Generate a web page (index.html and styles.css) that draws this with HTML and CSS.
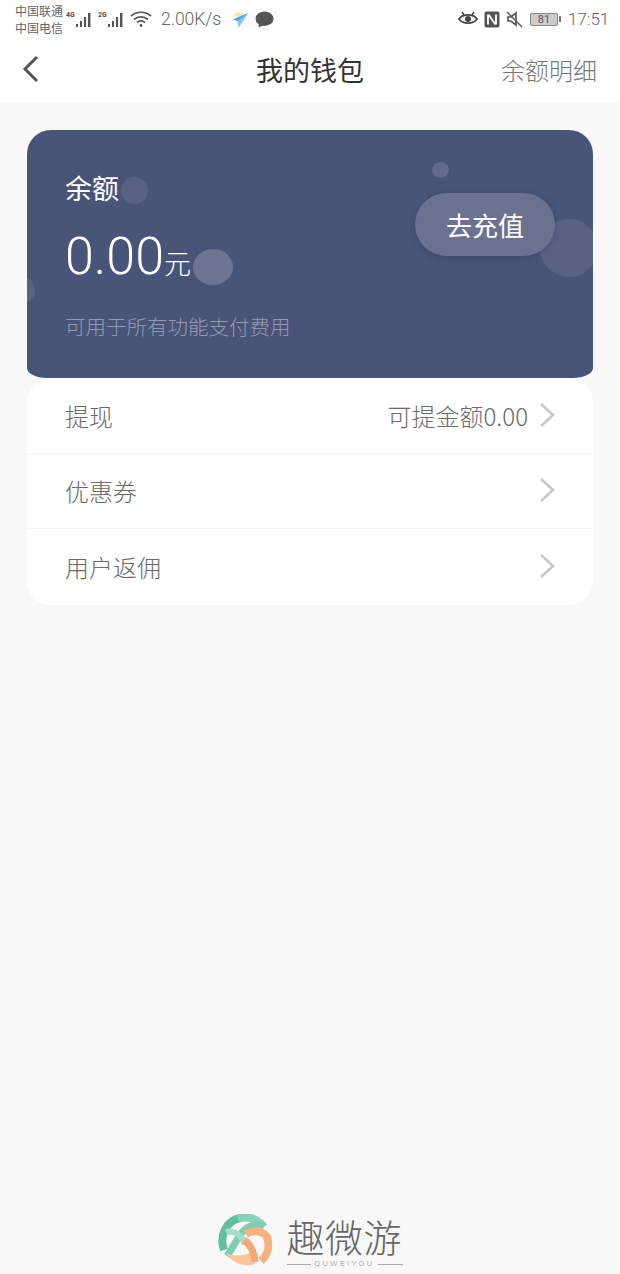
FILE: index.html
```html
<!DOCTYPE html>
<html lang="zh-CN">
<head>
<meta charset="utf-8">
<title>我的钱包</title>
<link rel="stylesheet" href="styles.css">
</head>
<body>
<div class="page">
  <div class="top">
    <div class="status">
      <div class="carriers"><span>中国联通</span><span>中国电信</span></div>
      <svg class="sig" width="29" height="20" viewBox="0 0 29 20">
        <text class="sig-label" x="0" y="8">4G</text>
        <g class="bars"><rect x="10" y="15" width="2" height="3"/><rect x="14" y="12" width="2" height="6"/><rect x="18" y="8" width="2" height="10"/><rect x="22" y="4" width="2.4" height="14"/></g>
      </svg>
      <svg class="sig sig-b" width="29" height="20" viewBox="0 0 29 20">
        <text class="sig-label" x="0" y="8">2G</text>
        <g class="bars"><rect x="10" y="15" width="2" height="3"/><rect x="14" y="12" width="2" height="6"/><rect x="18" y="8" width="2" height="10"/><rect x="22" y="4" width="2.4" height="14"/></g>
      </svg>
      <svg class="wifi" width="22" height="18" viewBox="0 0 22 18" fill="none" stroke="#555" stroke-width="1.7">
        <path d="M1 6c5.500-5 14.500-5 20 0"/><path d="M4 9.500c4-3.500 10-3.500 14 0"/><path d="M7 12.500c2.500-2 5.500-2 8 0"/>
        <circle cx="11" cy="15.500" r="1.400" fill="#555" stroke="none"/>
      </svg>
      <span class="speed">2.00K/s</span>
      <svg class="plane" width="17" height="17" viewBox="0 0 17 17">
        <path d="M2 3l6-2 3 3-6 3z" fill="#f2e5a6"/>
        <path d="M16 2L1 8.500l4.500 1.500L7 16z" fill="#4a9fe0"/>
        <path d="M16 2L5.500 10 7 16l2.500-4z" fill="#8cc6ee"/>
      </svg>
      <svg class="bubble" width="19" height="17" viewBox="0 0 19 17">
        <ellipse cx="9.500" cy="7.700" rx="9" ry="7.200" fill="#555"/>
        <path d="M4 12l-.5 4.500L9 14z" fill="#555"/>
      </svg>
      <div class="status-right">
        <svg width="20" height="16" viewBox="0 0 20 16" fill="none" stroke="#444" stroke-width="1.800">
          <path d="M1 8c4-5.500 14-5.500 18 0-4 5.500-14 5.500-18 0z"/>
          <circle cx="10" cy="8" r="3" fill="#444" stroke="none"/>
          <path d="M4 1l2 3M16 1l-2 3" stroke-width="1.500"/>
        </svg>
        <svg width="16" height="17" viewBox="0 0 16 17">
          <rect x="0.500" y="0.500" width="15" height="16" rx="2" fill="#555"/>
          <path d="M4 3.500v10M12 3.500v10M4.500 3.500l7 10" fill="none" stroke="#fff" stroke-width="1.800"/>
        </svg>
        <svg width="17" height="17" viewBox="0 0 17 17" fill="none" stroke="#555" stroke-width="1.700">
          <path d="M2 6h3l5-4v12l-5-4H2z"/>
          <path d="M1 1l15 15" stroke-width="1.500"/>
        </svg>
        <div class="battery"><span class="battery-body">81</span><i class="battery-cap"></i></div>
        <span class="clock">17:51</span>
      </div>
    </div>
    <header class="nav">
      <svg class="back" width="17" height="28" viewBox="0 0 17 28" fill="none" stroke="#555" stroke-width="3">
        <path d="M15 2L3 14l12 12"/>
      </svg>
      <h1 class="nav-title">我的钱包</h1>
      <a class="nav-link">余额明细</a>
    </header>
  </div>

  <main class="content">
    <section class="card">
      <i class="dot dot-a"></i>
      <i class="dot dot-b"></i>
      <i class="dot dot-c"></i>
      <i class="dot dot-d"></i>
      <i class="dot dot-e"></i>
      <div class="card-info">
        <div class="card-label">余额</div>
        <div class="card-amount">0.00<span class="card-unit">元</span></div>
        <div class="card-note">可用于所有功能支付费用</div>
      </div>
      <button class="recharge">去充值</button>
    </section>
    <ul class="menu">
      <li class="menu-row"><span>提现</span><span class="menu-value">可提金额0.00</span><svg class="chevron" width="16" height="26" viewBox="0 0 16 26" fill="none" stroke="#c8c8c8" stroke-width="2.600"><path d="M2 2l12 11L2 24"/></svg></li>
      <li class="menu-row"><span>优惠券</span><svg class="chevron" width="16" height="26" viewBox="0 0 16 26" fill="none" stroke="#c8c8c8" stroke-width="2.600"><path d="M2 2l12 11L2 24"/></svg></li>
      <li class="menu-row"><span>用户返佣</span><svg class="chevron" width="16" height="26" viewBox="0 0 16 26" fill="none" stroke="#c8c8c8" stroke-width="2.600"><path d="M2 2l12 11L2 24"/></svg></li>
    </ul>
  </main>

  <footer class="brand">
    <svg class="brand-mark" width="54" height="54" viewBox="0 0 54 54" fill="none">
      <path d="M6 36C1 22 8 7 22 4" stroke="#63bfa0" stroke-width="8"/>
      <path d="M20 4.500C30 1.500 40 5 46 13" stroke="#86d3b8" stroke-width="8"/>
      <path d="M46 13C36 8 26 13 20 24 16 31 12 38 9 42" stroke="#7fcdb2" stroke-width="7"/>
      <path d="M8 18c8-2 15 3 19 12" stroke="#a5dfcc" stroke-width="6"/>
      <path d="M28 20c8-5 17-3 21 3 3 9 1 18-6 24" stroke="#f7b283" stroke-width="8"/>
      <path d="M8 39c9 4 20 3 27-2l2 13c-9 3-21 1-29-11z" fill="#f9c59b"/>
      <path d="M26 26c6 4 10 11 11 22" stroke="#f5a877" stroke-width="7"/>
    </svg>
    <div class="brand-text">
      <div class="brand-name">趣微游</div>
      <div class="brand-sub">QUWEIYOU</div>
    </div>
  </footer>
</div>
</body>
</html>
```

FILE: styles.css
```css
* { box-sizing: border-box; }

html, body { margin: 0; padding: 0; }

body {
  background: #f8f8f8;
  font-family: "Noto Sans CJK SC", "Noto Sans", sans-serif;
  font-weight: 300;
  color: #666;
}

.page {
  height: 1274px;
  display: flex;
  flex-direction: column;
  overflow: hidden;
}

/* status bar + navigation */
.top { background: #fff; height: 103px; }

.status {
  height: 38px;
  display: flex;
  align-items: center;
  padding: 0 12px 0 15px;
  color: #555;
}

.carriers {
  display: flex;
  flex-direction: column;
  width: 48px;
  font-size: 12px;
  line-height: 17px;
  font-weight: 400;
  color: #666;
  white-space: nowrap;
}

.sig { margin-left: 3px; flex: none; }
.sig-b { margin-left: 3px; }
.sig-label { font: 700 8px "Roboto Condensed", "Liberation Sans", sans-serif; fill: #555; }
.bars { fill: #555; }

.wifi { margin-left: 3px; }

.speed {
  margin-left: 9px;
  width: 62px;
  font: 300 17.500px Roboto, sans-serif;
  color: #666;
}

.plane { margin-left: 9px; }
.bubble { margin-left: 6px; }

.status-right {
  margin-left: auto;
  display: flex;
  align-items: center;
  gap: 6px;
}

.battery { display: flex; align-items: center; margin-left: 1px; }

.battery-body {
  width: 28px;
  height: 13px;
  border: 1px solid #888;
  border-radius: 2px;
  background: #ccc;
  font: 400 11px/11px Roboto, sans-serif;
  text-align: center;
  color: #555;
}

.battery-cap { width: 2px; height: 6px; background: #777; margin-left: 1px; }

.clock {
  width: 40px;
  margin-left: 1px;
  font: 300 17px Roboto, sans-serif;
  color: #666;
  white-space: nowrap;
}

.nav {
  position: relative;
  height: 65px;
  display: flex;
  align-items: center;
  justify-content: space-between;
  padding: 0 23px 3px 22px;
}

.nav-title {
  position: absolute;
  left: 0;
  right: 0;
  margin: 0;
  text-align: center;
  font-size: 27px;
  font-weight: 400;
  color: #333;
}

.nav-link { font-size: 24px; color: #777; }

/* wallet card */
.content { padding: 27px 27px 0; }

.card {
  position: relative;
  height: 248px;
  display: flex;
  align-items: flex-start;
  justify-content: space-between;
  padding: 0 38px;
  overflow: hidden;
  background: #485478;
  border-radius: 24px 24px 20px 20px / 24px 24px 10px 10px;
  color: #fff;
}

.dot { position: absolute; border-radius: 50%; background: rgba(255, 255, 255, .09); }
.dot-a { left: 94px; top: 47px; width: 27px; height: 27px; }
.dot-b { left: 166px; top: 119px; width: 40px; height: 36px; background: rgba(255, 255, 255, .2); }
.dot-c { left: -10px; top: 148px; width: 18px; height: 24px; }
.dot-d { left: 405px; top: 32px; width: 17px; height: 16px; background: rgba(255, 255, 255, .14); }
.dot-e { left: 513px; top: 89px; width: 58px; height: 58px; }

.card-info { position: relative; }

.card-label {
  margin-top: 39px;
  font-size: 27px;
  line-height: 38px;
  font-weight: 400;
}

.card-amount {
  margin-top: 16px;
  font: 300 52px/68px Roboto, sans-serif;
  white-space: nowrap;
}

.card-unit {
  font-family: "Noto Sans CJK SC", sans-serif;
  font-size: 27px;
}

.card-note {
  margin-top: 14px;
  font-size: 20.500px;
  line-height: 30px;
  color: rgba(255, 255, 255, .42);
  white-space: nowrap;
}

.recharge {
  position: relative;
  margin-top: 63px;
  width: 140px;
  height: 63px;
  padding: 0;
  border: 0;
  border-radius: 32px;
  background: #6b7290;
  box-shadow: 0 2px 6px rgba(40, 48, 80, .3);
  color: #fff;
  font-family: inherit;
  font-size: 26px;
  font-weight: 400;
}

/* menu list */
.menu {
  margin: 0;
  padding: 0;
  list-style: none;
  background: #fff;
  border-radius: 24px;
}

.menu-row {
  height: 75.500px;
  display: flex;
  align-items: center;
  padding: 0 38px;
  font-size: 24px;
  color: #6a6a6a;
  border-bottom: 1px solid #f4f4f4;
}

.menu-row:last-child { border-bottom: 0; }

.menu-value { margin-left: auto; color: #6a6a6a; }

.chevron { margin-left: 11px; margin-top: -1px; flex: none; }
.menu-row > span:first-child + .chevron { margin-left: auto; }

/* brand footer */
.brand {
  margin-top: auto;
  height: 57px;
  margin-bottom: 3px;
  display: flex;
  justify-content: center;
  align-items: flex-start;
  gap: 15px;
}

.brand-mark { flex: none; }

.brand-text { width: 116px; }

.brand-name {
  font-size: 38px;
  line-height: 44px;
  letter-spacing: .5px;
  color: #666;
  white-space: nowrap;
}

.brand-sub {
  display: flex;
  align-items: center;
  gap: 4px;
  justify-content: center;
  font: 300 8px/12px Roboto, sans-serif;
  letter-spacing: 2.500px;
  color: #888;
  white-space: nowrap;
}

.brand-sub::before,
.brand-sub::after {
  content: "";
  flex: 1;
  height: 1px;
  background: #aaa;
}
```
